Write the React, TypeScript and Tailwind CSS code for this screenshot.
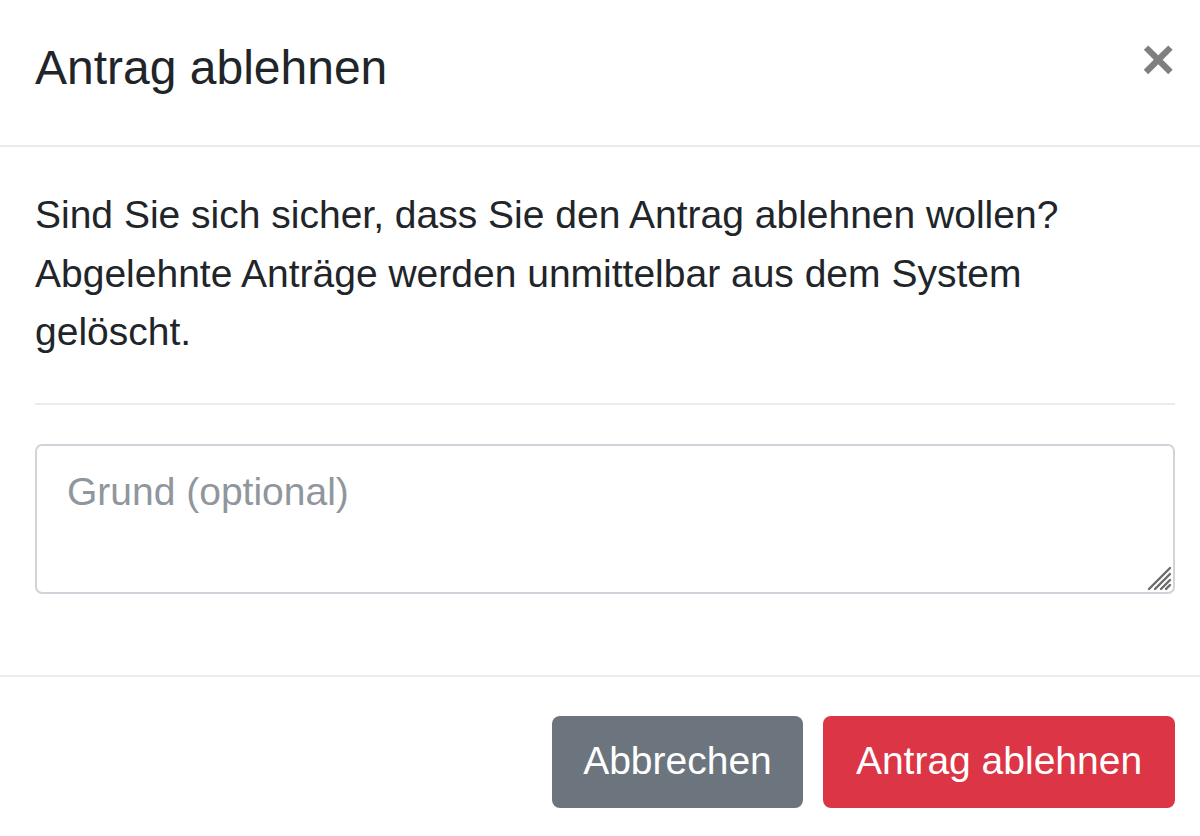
import React from "react";

const font = { fontFamily: '"Liberation Sans", Arial, sans-serif' };

const ResizeGrip = () => (
  <svg
    className="absolute right-[3px] bottom-[3px] pointer-events-none"
    width="26"
    height="26"
    viewBox="0 0 26 26"
  >
    <g stroke="#6b6b6b" strokeWidth="2.4" strokeLinecap="round">
      <line x1="3" y1="24" x2="24" y2="3" />
      <line x1="9" y1="24" x2="24" y2="9" />
      <line x1="15" y1="24" x2="24" y2="15" />
      <line x1="20" y1="24" x2="24" y2="20" />
    </g>
  </svg>
);

const App = () => {
  return (
    <div className="w-[1200px] h-[836px] bg-white text-[#212529] overflow-hidden" style={font}>
      <div className="flex justify-between items-start pl-[35px] pr-[25px] pt-[32px] h-[147px] border-b-2 border-[#e9ecef]">
        <h5 className="text-[48px] leading-[72px] font-normal">Antrag ablehnen</h5>
        <button className="text-[58px] leading-[72px] font-bold text-black/50 mt-[-9px]">×</button>
      </div>

      <div className="pl-[35px] pr-[25px] pt-[39px] pb-[81px]">
        <p className="text-[39px] leading-[58.5px]">
          Sind Sie sich sicher, dass Sie den Antrag ablehnen wollen? Abgelehnte Anträge werden unmittelbar aus dem
          System gelöscht.
        </p>
        <hr className="mt-[41px] mb-[39px] border-t-2 border-[#e9ecef]" />
        <div className="relative">
          <textarea
            className="block w-full h-[150px] resize-none border-2 border-[#ced4da] rounded-[7px] pl-[30px] pr-[30px] pt-[17px] text-[39px] leading-[58.5px] placeholder:text-[#8f969d] outline-none"
            style={font}
            placeholder="Grund (optional)"
          />
          <ResizeGrip />
        </div>
      </div>

      <div className="flex justify-end gap-[20px] pr-[25px] pt-[39px] border-t-2 border-[#e9ecef]">
        <button className="h-[92px] w-[251px] rounded-[8px] bg-[#6c757d] text-white text-[39px] leading-[58.5px]">
          Abbrechen
        </button>
        <button className="h-[92px] w-[352px] rounded-[8px] bg-[#dc3545] text-white text-[39px] leading-[58.5px]">
          Antrag ablehnen
        </button>
      </div>
    </div>
  );
};

export default App;
